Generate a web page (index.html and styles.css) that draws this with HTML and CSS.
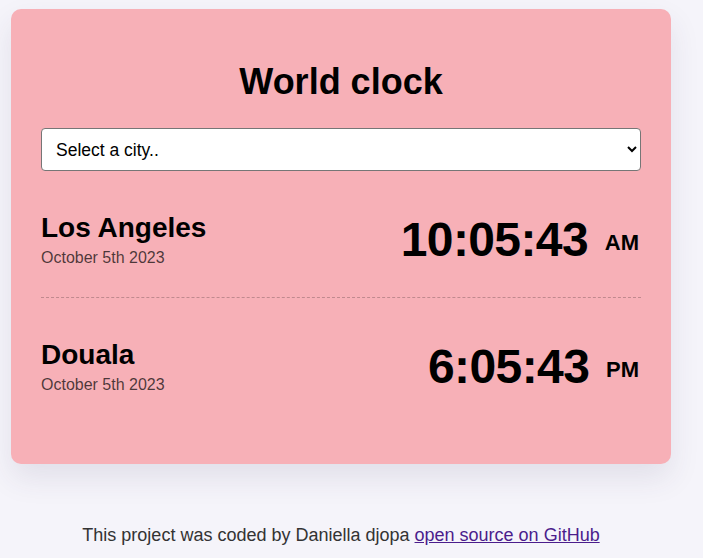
FILE: index.html
```html
<!DOCTYPE html>
<html lang="en">
<head>
<meta charset="utf-8">
<title>World clock</title>
<link rel="stylesheet" href="styles.css">
</head>
<body>
<div class="container">
  <main class="card">
    <h1 class="title">World clock</h1>
    <select class="city-select">
      <option>Select a city..</option>
      <option>Los Angeles</option>
      <option>Douala</option>
      <option>Paris</option>
      <option>Tokyo</option>
    </select>
    <div class="cities">
      <div class="city">
        <div class="city-info">
          <h2 class="city-name">Los Angeles</h2>
          <div class="city-date">October 5th 2023</div>
        </div>
        <div class="city-time">10:05:43 <small class="meridiem">AM</small></div>
      </div>
      <div class="city">
        <div class="city-info">
          <h2 class="city-name">Douala</h2>
          <div class="city-date">October 5th 2023</div>
        </div>
        <div class="city-time">6:05:43 <small class="meridiem">PM</small></div>
      </div>
    </div>
  </main>
  <footer class="footer">
    This project was coded by Daniella djopa <a class="footer-link" href="#">open source on GitHub</a>
  </footer>
</div>
</body>
</html>
```

FILE: styles.css
```css
html, body {
  margin: 0;
  padding: 0;
}

body {
  background: #f5f4fa;
  font-family: "Liberation Sans", Arial, sans-serif;
  color: #000;
}

.container {
  width: 660px;
  margin: 9px 0 0 11px;
}

.card {
  display: block;
  background: #f7b0b7;
  border-radius: 10px;
  padding: 30px;
  box-shadow: 0 14px 30px rgba(60, 50, 90, 0.10);
}

.title {
  margin: 22px 0 25px;
  font-size: 36px;
  font-weight: bold;
  text-align: center;
  line-height: normal;
}

.city-select {
  display: block;
  width: 100%;
  height: 43px;
  box-sizing: border-box;
  font-family: "Liberation Sans", Arial, sans-serif;
  font-size: 17.5px;
  color: #000;
  background-color: #fff;
  border: 1px solid #767676;
  border-radius: 4px;
  padding: 0 10px;
  margin: 0;
}

.city {
  display: flex;
  justify-content: space-between;
  align-items: center;
  padding: 41px 0 30px;
  border-bottom: 1px dashed rgba(0, 0, 0, 0.22);
}

.city:last-child {
  border-bottom: none;
  padding-bottom: 40px;
}

.city-name {
  margin: 0 0 5px;
  font-size: 28px;
  font-weight: bold;
  line-height: normal;
}

.city-date {
  font-size: 16px;
  color: rgba(0, 0, 0, 0.7);
  line-height: normal;
}

.city-time {
  font-size: 48px;
  font-weight: bold;
  line-height: normal;
  letter-spacing: -0.6px;
  white-space: nowrap;
  margin-right: 2px;
}

.meridiem {
  font-size: 22px;
  vertical-align: middle;
  letter-spacing: 0;
  margin-left: 4px;
}

.footer {
  margin-top: 61px;
  text-align: center;
  font-size: 18px;
  color: #333;
  line-height: normal;
}

.footer-link {
  color: #4b1d8c;
}
```
